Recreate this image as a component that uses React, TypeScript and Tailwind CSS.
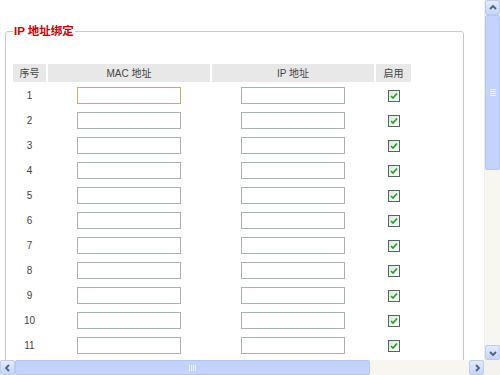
import React from 'react';

const rows = Array.from({ length: 11 }, (_, i) => i + 1);

const Chevron: React.FC<{ dir: 'up' | 'down' | 'left' | 'right' }> = ({ dir }) => {
  const d = {
    up: 'M2 6 L5 3 L8 6',
    down: 'M2 4 L5 7 L8 4',
    left: 'M6 2 L3 5 L6 8',
    right: 'M4 2 L7 5 L4 8',
  }[dir];
  return (
    <svg width="10" height="10" viewBox="0 0 10 10">
      <path d={d} fill="none" stroke="#4d6185" strokeWidth="1.8" />
    </svg>
  );
};

const ArrowBtn: React.FC<{ dir: 'up' | 'down' | 'left' | 'right' }> = ({ dir }) => (
  <div className="w-[15px] h-[15px] shrink-0 flex items-center justify-center rounded-[2px] border border-[#bccbf0] bg-gradient-to-b from-[#e3ebfd] to-[#c5d5fa]">
    <Chevron dir={dir} />
  </div>
);

const Grip: React.FC<{ vertical?: boolean }> = ({ vertical }) => (
  <div className={vertical ? 'flex flex-col gap-[1px]' : 'flex gap-[1px]'}>
    {[0, 1, 2, 3].map((i) => (
      <span key={i} className={vertical ? 'block w-[6px] h-px bg-[#eef3fe]' : 'block w-px h-[6px] bg-[#eef3fe]'} />
    ))}
  </div>
);

const CheckBox: React.FC = () => (
  <span className="inline-flex w-[12px] h-[12px] items-center justify-center border border-[#4f6a5c] bg-gradient-to-br from-[#dfe5df] to-white align-middle">
    <svg width="8" height="8" viewBox="0 0 8 8">
      <path d="M1 4 L3 6 L7 1.5" fill="none" stroke="#21a121" strokeWidth="1.7" />
    </svg>
  </span>
);

export default function App() {
  return (
    <div
      className="w-[500px] h-[375px] flex flex-col overflow-hidden bg-white text-[10px] text-[#444]"
      style={{ fontFamily: '"Liberation Sans", "Noto Sans CJK SC", sans-serif' }}
    >
      <div className="flex flex-1 min-h-0">
        <div className="flex-1 overflow-hidden pt-[24px]">
          <fieldset className="ml-[5px] w-[459px] h-[400px] border border-[#c8c8c8] rounded-[3px]">
            <legend className="ml-[7px] px-[1px] text-[11.5px] leading-[14px] font-bold text-[#cc0000]">IP 地址绑定</legend>
            <table className="ml-[5px] mt-[24px] border-separate border-spacing-[2px]">
              <thead>
                <tr className="h-[18px]">
                  <th className="w-[33px] bg-[#e8e8e8] font-normal">序号</th>
                  <th className="w-[162px] bg-[#e8e8e8] font-normal">MAC 地址</th>
                  <th className="w-[162px] bg-[#e8e8e8] font-normal">IP 地址</th>
                  <th className="w-[35px] bg-[#e8e8e8] font-normal">启用</th>
                </tr>
              </thead>
              <tbody>
                {rows.map((n) => (
                  <tr key={n} className="h-[23px]">
                    <td className="text-center">{n}</td>
                    <td className="text-center">
                      <input
                        type="text"
                        className={`w-[104px] h-[17px] align-middle bg-white border ${n === 1 ? 'border-[#c8ad70]' : 'border-[#a9b0b4]'}`}
                      />
                    </td>
                    <td className="text-center">
                      <input type="text" className="w-[104px] h-[17px] align-middle bg-white border border-[#a9b0b4]" />
                    </td>
                    <td className="text-center">
                      <CheckBox />
                    </td>
                  </tr>
                ))}
              </tbody>
            </table>
          </fieldset>
        </div>
        <div className="w-[16px] flex flex-col bg-[#f7f6f0] border-l border-[#eeeee8]">
          <ArrowBtn dir="up" />
          <div className="h-[155px] shrink-0 flex items-center justify-center rounded-[2px] border border-[#b4c6f2] bg-[#c4d3fb]">
            <Grip vertical />
          </div>
          <div className="flex-1" />
          <ArrowBtn dir="down" />
        </div>
      </div>
      <div className="h-[15px] flex">
        <div className="w-[484px] flex bg-[#f7f6f0]">
          <ArrowBtn dir="left" />
          <div className="w-[355px] shrink-0 flex items-center justify-center rounded-[2px] border border-[#b4c6f2] bg-[#c4d3fb]">
            <Grip />
          </div>
          <div className="flex-1" />
          <ArrowBtn dir="right" />
        </div>
        <div className="flex-1 bg-[#f3f2ec]" />
      </div>
    </div>
  );
}
